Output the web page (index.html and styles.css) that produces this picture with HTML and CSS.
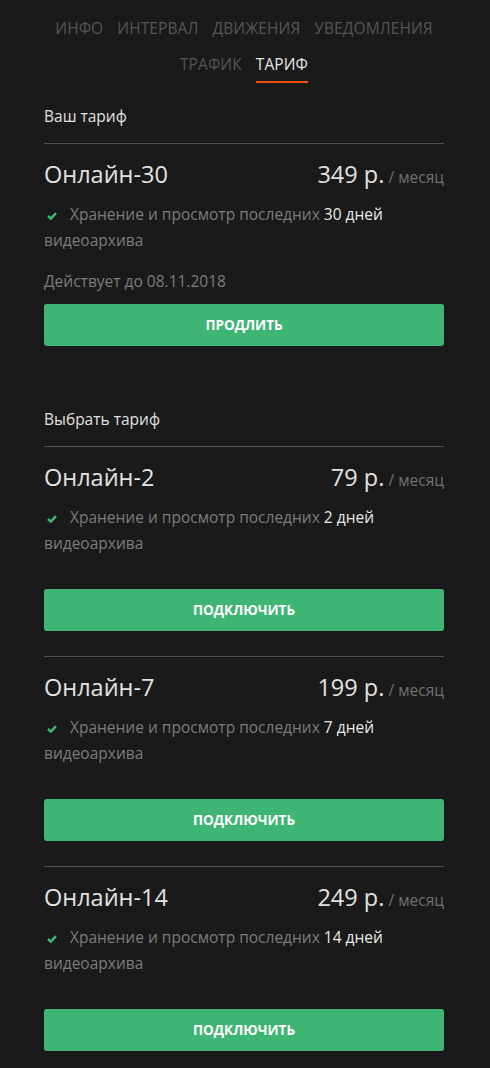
FILE: index.html
```html
<!DOCTYPE html>
<html lang="ru">
<head>
<meta charset="utf-8">
<link rel="stylesheet" href="styles.css">
</head>
<body>
<div class="page">
  <nav class="tabs">
    <div class="tabs-row">
      <span class="tab">Инфо</span>
      <span class="tab">Интервал</span>
      <span class="tab">Движения</span>
      <span class="tab">Уведомления</span>
    </div>
    <div class="tabs-row">
      <span class="tab">Трафик</span>
      <span class="tab active">Тариф</span>
    </div>
  </nav>

  <section class="section">
    <h2 class="section-title">Ваш тариф</h2>
    <div class="plan">
      <div class="plan-head">
        <span class="plan-name">Онлайн-30</span>
        <span class="plan-price"><b>349 р.</b> <span class="per">/ месяц</span></span>
      </div>
      <p class="feature"><svg class="check" viewBox="0 0 10 8" width="10" height="8"><path d="M1 4 L3.8 6.6 L9 1.2" fill="none" stroke="#3fb574" stroke-width="2.6"/></svg>Хранение и просмотр последних <strong>30 дней</strong> видеоархива</p>
      <p class="valid">Действует до 08.11.2018</p>
      <button class="btn">Продлить</button>
    </div>
  </section>

  <section class="section choose">
    <h2 class="section-title">Выбрать тариф</h2>
    <div class="plan">
      <div class="plan-head">
        <span class="plan-name">Онлайн-2</span>
        <span class="plan-price"><b>79 р.</b> <span class="per">/ месяц</span></span>
      </div>
      <p class="feature"><svg class="check" viewBox="0 0 10 8" width="10" height="8"><path d="M1 4 L3.8 6.6 L9 1.2" fill="none" stroke="#3fb574" stroke-width="2.6"/></svg>Хранение и просмотр последних <strong>2 дней</strong> видеоархива</p>
      <button class="btn">Подключить</button>
    </div>
    <div class="plan">
      <div class="plan-head">
        <span class="plan-name">Онлайн-7</span>
        <span class="plan-price"><b>199 р.</b> <span class="per">/ месяц</span></span>
      </div>
      <p class="feature"><svg class="check" viewBox="0 0 10 8" width="10" height="8"><path d="M1 4 L3.8 6.6 L9 1.2" fill="none" stroke="#3fb574" stroke-width="2.6"/></svg>Хранение и просмотр последних <strong>7 дней</strong> видеоархива</p>
      <button class="btn">Подключить</button>
    </div>
    <div class="plan">
      <div class="plan-head">
        <span class="plan-name">Онлайн-14</span>
        <span class="plan-price"><b>249 р.</b> <span class="per">/ месяц</span></span>
      </div>
      <p class="feature"><svg class="check" viewBox="0 0 10 8" width="10" height="8"><path d="M1 4 L3.8 6.6 L9 1.2" fill="none" stroke="#3fb574" stroke-width="2.6"/></svg>Хранение и просмотр последних <strong>14 дней</strong> видеоархива</p>
      <button class="btn">Подключить</button>
    </div>
  </section>
</div>
</body>
</html>
```

FILE: styles.css
```css
* { box-sizing: border-box; }
html, body {
  margin: 0;
  padding: 0;
  background: #1a1a1a;
}
body {
  font-family: "Open Sans", "Noto Sans", sans-serif;
  color: #dcdcdc;
}
.page {
  width: 400px;
  margin: 0 46px 0 44px;
  padding: 17px 0 18px;
}
.tabs {
  display: flex;
  flex-direction: column;
  align-items: center;
  gap: 14px;
}
.tabs-row {
  display: flex;
  justify-content: center;
  gap: 14px;
}
.tab {
  font-size: 15.5px;
  line-height: 22px;
  text-transform: uppercase;
  color: #555555;
  letter-spacing: 0.1px;
}
.tab.active {
  color: #e6e6e6;
  position: relative;
}
.tab.active::after {
  content: "";
  position: absolute;
  left: 0;
  right: 0;
  bottom: -8px;
  height: 2px;
  background: #ee4f12;
}
.section {
  margin-top: 31px;
}
.section.choose {
  margin-top: 38px;
}
.section-title {
  margin: 0;
  font-size: 15.5px;
  font-weight: 400;
  line-height: 20px;
  color: #e0e0e0;
  padding-bottom: 17px;
}
.plan {
  border-top: 1px solid #505050;
  padding: 13px 0 25px;
}
.plan-head {
  display: flex;
  justify-content: space-between;
  align-items: baseline;
}
.plan-name {
  font-size: 23.5px;
  line-height: 34px;
  color: #e2e2e2;
}
.plan-price b {
  font-weight: 400;
  font-size: 23.5px;
  color: #e2e2e2;
}
.per {
  font-size: 15.5px;
  color: #707070;
}
.feature {
  margin: 10px 0 0;
  font-size: 15.5px;
  line-height: 26px;
  color: #7c7c7c;
}
.feature strong {
  font-weight: 400;
  color: #e8e8e8;
}
.check {
  display: inline-block;
  margin: 0 13px 0 3px;
  vertical-align: 0;
}
.valid {
  margin: 18px 0 0;
  font-size: 15.5px;
  line-height: 20px;
  color: #7c7c7c;
}
.btn {
  display: block;
  width: 100%;
  height: 42px;
  margin-top: 33px;
  border: 0;
  border-radius: 3px;
  background: #3fb574;
  color: #ffffff;
  font-family: "Open Sans", "Noto Sans", sans-serif;
  font-weight: 700;
  font-size: 13.5px;
  text-transform: uppercase;
}
.valid + .btn {
  margin-top: 13px;
}
```
